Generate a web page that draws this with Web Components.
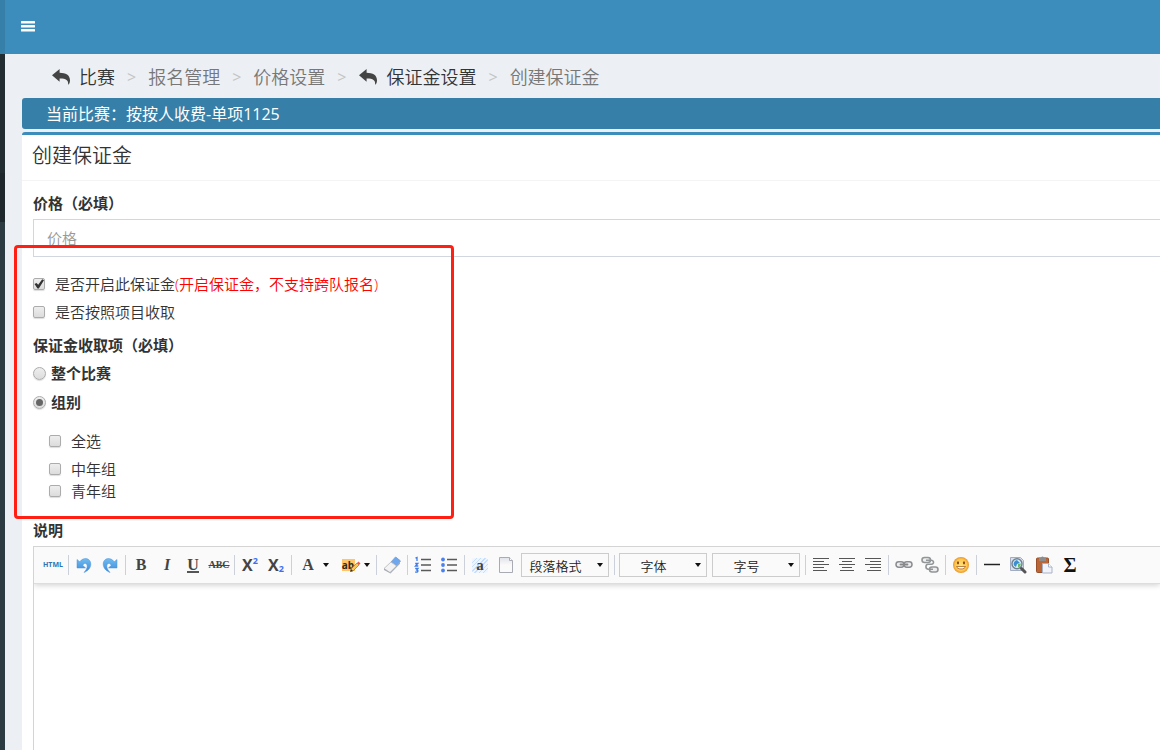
<!DOCTYPE html>
<html lang="zh-CN">
<head>
<meta charset="utf-8">
<title>创建保证金</title>
<style>
  html, body { height: 100%; margin: 0; }
  body { background: #ecf0f5; color: #333; font: 15px/22px "Open Sans", "Noto Sans CJK SC", sans-serif; overflow-x: hidden; }
</style>
</head>
<body>
<app-shell>
  <top-bar slot="header"></top-bar>
  <side-rail slot="side"></side-rail>
  <crumb-trail>
    <crumb-item href="#match" back>比赛</crumb-item>
    <crumb-item>报名管理</crumb-item>
    <crumb-item>价格设置</crumb-item>
    <crumb-item href="#deposit" back>保证金设置</crumb-item>
    <crumb-item>创建保证金</crumb-item>
  </crumb-trail>
  <match-notice>当前比赛：按按人收费-单项1125</match-notice>
  <form-panel heading="创建保证金">
    <price-field></price-field>
    <mark-frame><deposit-options></deposit-options></mark-frame>
    <rich-editor></rich-editor>
  </form-panel>
</app-shell>

<script>
function define(name, html, setup) {
  const template = document.createElement('template');
  template.innerHTML = html;
  customElements.define(name, class extends HTMLElement {
    constructor() {
      super();
      this.attachShadow({ mode: 'open' }).append(template.content.cloneNode(true));
    }
    connectedCallback() { if (setup) setup(this, this.shadowRoot); }
  });
}

define('app-shell', `
<style>
  :host { display: flex; flex-direction: column; min-height: 100vh; }
  .body { display: flex; flex: 1; }
  main { flex: 1; min-width: 0; display: flex; flex-direction: column; padding-left: 17px; }
</style>
<slot name="header"></slot>
<div class="body"><slot name="side"></slot><main><slot></slot></main></div>`);

define('top-bar', `
<style>
  :host { display: flex; height: 54px; background: #3c8dbc; border-left: 5px solid #367fa9; box-sizing: border-box; }
  button { border: 0; background: none; padding: 0 16px; display: flex; align-items: center; color: #fff; }
</style>
<button type="button" aria-label="菜单"><svg width="14" height="14" viewBox="0 0 14 14" fill="currentColor"><rect y="1" width="14" height="2.600" rx=".6"/><rect y="5" width="14" height="2.600" rx=".6"/><rect y="9" width="14" height="2.600" rx=".6"/></svg></button>`);

define('side-rail', `
<style>
  :host { display: flex; flex-direction: column; width: 5px; background: #222d32; }
  .head { height: 119px; }
  .active { height: 49px; background: #1e282c; }
  .menu { flex: 1; background: #2c3b41; }
</style>
<div class="head"></div><div class="active"></div><div class="menu"></div>`);

define('crumb-trail', `
<style>
  :host { display: block; }
  nav { display: flex; height: 44px; align-items: center; padding: 2px 0 0 29px; box-sizing: border-box; }
</style>
<nav aria-label="路径"><slot></slot></nav>`);

define('crumb-item', `
<style>
  :host { display: flex; align-items: center; font-size: 18px; line-height: 24px; font-weight: 350; color: #777; }
  :host(:not(:first-child))::before { content: ">"; color: #c4c4c4; font-size: 16px; font-weight: 400; margin: 0 12px; }
  a { display: flex; align-items: center; gap: 8px; color: #333; text-decoration: none; }
</style>
<span><slot></slot></span>`, (host, root) => {
  if (!host.hasAttribute('back')) return;
  const link = document.createElement('a');
  link.href = host.getAttribute('href');
  link.innerHTML = '<svg width="20" height="18" viewBox="0 0 20 18" fill="#444"><path d="M1 7.2 8.600 1v3.700C14.800 4.800 19 7 19 12.200c0 1.700-.5 3.300-1.400 4.300-.3.200-.6 0-.5-.3.500-3.800-2.200-5.800-8.500-5.700v3.300z"/></svg><slot></slot>';
  root.querySelector('span').replaceWith(link);
});

define('match-notice', `
<style>
  :host { display: block; background: #367fa9; color: #fff; font-size: 16px; border-radius: 3px 0 0 3px; padding: 5px 24px 4px; margin-bottom: 3px; }
</style>
<slot></slot>`);

define('form-panel', `
<style>
  :host { flex: 1; display: flex; flex-direction: column; background: #fff; border-top: 3px solid #3c8dbc; border-radius: 3px 0 0 0; }
  header { padding: 8px 10px 11px; border-bottom: 1px solid #f4f4f4; }
  h3 { margin: 0; font-size: 20px; line-height: 26px; font-weight: 350; color: #333; }
  section { flex: 1; display: flex; flex-direction: column; padding: 11px 0 0 11px; }
</style>
<header><h3></h3></header><section><slot></slot></section>`, (host, root) => {
  root.querySelector('h3').textContent = host.getAttribute('heading');
});

define('price-field', `
<style>
  :host { display: block; }
  label { display: block; font-weight: 700; margin-bottom: 5px; }
  input { display: block; width: 100%; height: 38px; box-sizing: border-box; border: 1px solid #d2d6de; border-right: 0; padding: 0 13px; font: inherit; font-weight: 350; background: #fff; border-radius: 0; }
  input::placeholder { color: #999; }
</style>
<label for="price">价格（必填）</label><input id="price" type="text" placeholder="价格">`);

define('mark-frame', `
<style>
  :host { display: block; position: relative; }
  .mark { position: absolute; left: -19px; top: -12px; bottom: 0; width: 440px; box-sizing: border-box; border: 3px solid #ff2013; border-radius: 4px; pointer-events: none; }
</style>
<slot></slot><div class="mark"></div>`);

define('deposit-options', `
<style>
  :host { display: block; padding: 16px 0 17px; font-weight: 350; }
  fieldset { border: 0; margin: 0; padding: 0; min-width: 0; }
  legend { padding: 0; font-weight: 700; margin-bottom: 6px; }
  label { display: flex; align-items: center; }
  em { font-style: normal; color: #f00; }
  .row { gap: 10px; margin-bottom: 6px; }
  .pick { font-weight: 700; gap: 5px; margin-bottom: 7px; }
  .groups { padding: 10px 0 0 16px; }
  .groups .row { margin-bottom: 0; }
  .groups .all { margin-bottom: 6px; }
  .lead { margin-bottom: 11px; }
  input { appearance: none; box-sizing: border-box; flex: none; margin: 0; width: 12px; height: 12px; display: grid; place-items: center; border: 1px solid #acacac; border-radius: 2px; background: linear-gradient(#eee, #dcdcdc); box-shadow: 0 1px 1px #ddd; }
  input[type=radio] { width: 13px; height: 13px; border-radius: 50%; }
  input[type=checkbox]:checked::before { content: ""; width: 10px; height: 10px; background: #333; clip-path: polygon(5% 50%, 25% 40%, 42% 58%, 82% 3%, 100% 12%, 48% 95%, 35% 95%); }
  input[type=radio]:checked::before { content: ""; width: 7px; height: 7px; border-radius: 50%; background: #666; }
</style>
<label class="row"><input type="checkbox" checked><span>是否开启此保证金<em>(开启保证金，不支持跨队报名)</em></span></label>
<label class="row lead"><input type="checkbox">是否按照项目收取</label>
<fieldset>
  <legend>保证金收取项（必填）</legend>
  <label class="pick"><input type="radio" name="scope">整个比赛</label>
  <label class="pick"><input type="radio" name="scope" checked>组别</label>
</fieldset>
<div class="groups">
  <label class="row all"><input type="checkbox">全选</label>
  <label class="row"><input type="checkbox">中年组</label>
  <label class="row"><input type="checkbox">青年组</label>
</div>`);

const icons = {
  undo: '<defs><linearGradient id="g" x1="0" y1="0" x2="0" y2="1"><stop stop-color="#70bdf0"/><stop offset="1" stop-color="#3a87d9"/></linearGradient></defs><path fill="url(#g)" stroke="#4a93dc" stroke-width=".5" d="M2 3.500v8.500h8.500L7.800 9.300C9 6.500 12.200 6.800 12.200 10c0 2.300-1.200 4.200-3.200 6.500 4-1.500 6.800-4.500 6.800-8.500 0-6-7.500-7.500-11-2.200z"/>',
  eraser: '<path fill="#fafafa" stroke="#aaa" d="M8 6 12.500 1l5 4-5 6z"/><path fill="#6fa7ef" d="m8 6 4-4.500q.7-.8 1.500-.3l3.500 3q.8.800.2 1.500L13.500 10z"/><path fill="#f3f3f3" stroke="#b4b6bb" stroke-width=".8" d="M8 6 13.500 10 7 16.500 1 12.500z"/><path fill="#a6aab4" d="m13.500 10 3.500-4.200v2L7.500 17.500 1 14v-1.500l6 4z"/>',
  ol: '<g stroke="#5a5a5a" stroke-width="1.500"><path d="M7 3.500h10M7 9h10M7 14.500h10"/></g><path fill="none" stroke="#3f7de8" stroke-width="1.300" d="M1.500 2.200 3 1.500V5M1.200 7.500h2.600L1.500 10h2.800M1.200 12.500H4L2.800 14q1.700.3 1 1.500-.8 1-2.600.5"/>',
  ul: '<g stroke="#5a5a5a" stroke-width="1.500"><path d="M7 3.500h10M7 9h10M7 14.500h10"/></g><g fill="#4a80f0"><circle cx="3" cy="3.500" r="1.900"/><circle cx="3" cy="9" r="1.900"/><circle cx="3" cy="14.500" r="1.900"/></g>',
  page: '<defs><linearGradient id="p" x1="0" y1="0" x2="0" y2="1"><stop stop-color="#dfe2e9"/><stop offset=".5" stop-color="#fafafa"/></linearGradient></defs><path fill="url(#p)" stroke="#a8abb3" d="M2.500 1.500h10l3 3v12h-13z"/><path fill="#fff" stroke="#a8abb3" d="M12.500 1.500v3h3"/>',
  left: '<path stroke="#555" d="M1 2.500h16M1 5.500h11M1 8.500h16M1 11.500h11M1 14.500h14"/>',
  center: '<path stroke="#555" d="M1 2.500h16M4 5.500h10M1 8.500h16M4 11.500h10M2 14.500h14"/>',
  right: '<path stroke="#555" d="M1 2.500h16M6 5.500h11M1 8.500h16M6 11.500h11M3 14.500h14"/>',
  link: '<g fill="#eee" stroke="#8a8e90" stroke-width="1.500"><rect x="1" y="5.800" width="8" height="5.400" rx="2.700"/><rect x="9" y="5.800" width="8" height="5.400" rx="2.700"/></g><path stroke="#888" stroke-width="1.800" stroke-linecap="round" d="M5.500 8.500h7"/>',
  unlink: '<g fill="#eee" stroke="#929698" stroke-width="1.600"><rect x="1" y="1.500" width="8.500" height="5" rx="2.500"/><rect x="8.500" y="11" width="8.500" height="5" rx="2.500"/><path fill="none" d="M5 4.200h5c3 0 3.500 4 .5 4H7c-2.500 0-3 4.500 0 5h5"/></g>',
  smile: '<defs><radialGradient id="s"><stop stop-color="#ffe27a"/><stop offset=".7" stop-color="#ffc84f"/><stop offset="1" stop-color="#e9942c"/></radialGradient></defs><circle cx="9" cy="9" r="8" fill="url(#s)"/><g fill="#8a4a1c"><ellipse cx="6" cy="6.800" rx="1.100" ry="1.600"/><ellipse cx="12" cy="6.800" rx="1.100" ry="1.600"/></g><path fill="#fff" stroke="#a8642a" stroke-width=".8" d="M4.500 10.500h9c-.6 3.300-8.400 3.300-9 0z"/>',
  rule: '<path stroke="#222" stroke-width="1.500" d="M1 8.500h16"/>',
  preview: '<path fill="#d9e0ec" stroke="#a2adc2" d="M1.500 1.500h10l3 3v10h-13z"/><circle cx="8" cy="7.800" r="5" fill="#d7f0fb" stroke="#71808f" stroke-width="1.400"/><path fill="#3d8fd2" d="M8 4a4 4 0 0 0-3 5.500l2 1.500 1-3 3-1z"/><path fill="#6bb868" d="m9 8 3-.5-1 3-2 1z"/><path stroke="#555" stroke-width="3" stroke-linecap="round" d="m12.500 12.500 3.500 3.500"/>',
  paste: '<rect x="1.500" y="2" width="12" height="14.500" rx="1" fill="#bb6636" stroke="#99502a"/><path fill="#8c8c8c" d="M4 1.500h2q1.500-2 3 0h2V5H4z"/><path fill="#f1f4fa" stroke="#a8b2c4" d="M7.500 7.500h6l3.500 3.500v6H7.500z"/><path fill="#fff" stroke="#a8b2c4" d="M13.500 7.500V11H17"/>',
  pencil: '<path fill="#f6c65c" stroke="#ad6b27" stroke-width=".7" d="m3 10 6-6 2 2-6 6-2.500.5z"/><path fill="#e85d4b" d="m9 4 1.500-1.500 2 2L11 6z"/><path fill="#333" d="m3 10-.8 2.700L5 12z"/>'
};

define('tool-button', `
<style>
  :host { display: block; flex: none; }
  button { width: 26px; height: 24px; border: 0; padding: 0; background: none; display: flex; align-items: center; justify-content: center; color: #444; font: 700 16px/20px "Liberation Serif", serif; }
  :host([menu]) button { width: 40px; gap: 8px; padding-left: 4px; }
  svg { flex: none; }
  .flip { transform: scaleX(-1); }
  .html { font: 700 7px/12px "Open Sans", sans-serif; color: #2f75b5; }
  .italic { font-style: italic; }
  .under { border-bottom: 2px solid #555; line-height: 13px; }
  .strike { font-size: 10px; text-decoration: line-through; }
  .script { font: 700 16px/18px "Open Sans", sans-serif; display: flex; }
  sup, sub { font-size: 9px; line-height: 10px; color: #3d6ff0; }
  sub { align-self: flex-end; }
  .high { position: relative; background: #ffc568; font: 700 10px/12px "Open Sans", sans-serif; color: #33291a; width: 13px; }
  .high svg { position: absolute; left: 6px; top: 0; }
  .pattern { background: repeating-linear-gradient(135deg, #c6defc 0 1px, #edf5ff 1px 3px); border-radius: 3px; width: 16px; line-height: 15px; font-size: 15px; }
  .sigma { font-size: 20px; color: #111; }
</style>
<button type="button"></button>`, (host, root) => {
  const texts = {
    html: '<span class="html">HTML</span>', bold: 'B', italic: '<span class="italic">I</span>',
    underline: '<span class="under">U</span>', strike: '<span class="strike">ABC</span>',
    sup: '<span class="script">X<sup>2</sup></span>', sub: '<span class="script">X<sub>2</sub></span>',
    color: '<span>A</span>', high: '<span class="high">ab<svg width="14" height="14" viewBox="0 0 14 14">' + icons.pencil + '</svg></span>',
    auto: '<span class="pattern">a</span>', sigma: '<span class="sigma">Σ</span>'
  };
  const kind = host.getAttribute('kind');
  const draw = (name, flip) => `<svg class="${flip}" width="18" height="18" viewBox="0 0 18 18" fill="none">${icons[name]}</svg>`;
  const button = root.querySelector('button');
  button.setAttribute('aria-label', kind);
  button.innerHTML = texts[kind] || (kind === 'redo' ? draw('undo', 'flip') : draw(kind, ''));
  if (host.hasAttribute('menu')) button.innerHTML += '<svg width="8" height="4" viewBox="0 0 8 4"><path d="M1 0h6L4 4z" fill="#111"/></svg>';
});

define('tool-select', `
<style>
  :host { display: grid; flex: none; width: 88px; height: 24px; align-items: center; margin: 0 3px 0 2px; }
  select, svg { grid-area: 1 / 1; }
  select { appearance: none; width: 100%; height: 24px; box-sizing: border-box; border: 1px solid #ccc; border-radius: 0; background: #fafafa; padding: 2px 19px 0 0; margin: 0; text-align-last: center; font: 350 13px/20px "Open Sans", "Noto Sans CJK SC", sans-serif; color: #222; }
  svg { justify-self: end; margin-right: 5px; pointer-events: none; }
</style>
<select><option></option></select><svg width="8" height="4" viewBox="0 0 8 4"><path d="M1 0h6L4 4z" fill="#111"/></svg>`, (host, root) => {
  const name = host.getAttribute('label');
  root.querySelector('select').setAttribute('aria-label', name);
  root.querySelector('option').textContent = name;
});

define('rich-editor', `
<style>
  :host { flex: 1; display: flex; flex-direction: column; }
  #name { font-weight: 700; margin-bottom: 5px; }
  .frame { flex: 1; display: flex; flex-direction: column; border: 1px solid #d4d4d4; border-width: 1px 0 0 1px; }
  .bar { display: flex; align-items: center; height: 36px; padding-left: 6px; background: #fafafa; border-bottom: 1px solid #ddd; box-shadow: 0 1px 6px rgba(0, 0, 0, .2); clip-path: inset(0 0 -8px 0); }
  hr { flex: none; width: 1px; height: 20px; margin: 0 2px; border: 0; background: #ccd0d8; }
  .text { flex: 1; min-height: 120px; outline: 0; padding: 8px; }
</style>
<div id="name">说明</div>
<div class="frame">
  <div class="bar" role="toolbar">
    <tool-button kind="html"></tool-button><hr>
    <tool-button kind="undo"></tool-button><tool-button kind="redo"></tool-button><hr>
    <tool-button kind="bold"></tool-button><tool-button kind="italic"></tool-button><tool-button kind="underline"></tool-button><tool-button kind="strike"></tool-button><hr>
    <tool-button kind="sup"></tool-button><tool-button kind="sub"></tool-button><hr>
    <tool-button kind="color" menu></tool-button><tool-button kind="high" menu></tool-button><hr>
    <tool-button kind="eraser"></tool-button><hr>
    <tool-button kind="ol"></tool-button><tool-button kind="ul"></tool-button><hr>
    <tool-button kind="auto"></tool-button><tool-button kind="page"></tool-button>
    <tool-select label="段落格式"></tool-select><hr>
    <tool-select label="字体"></tool-select><tool-select label="字号"></tool-select><hr>
    <tool-button kind="left"></tool-button><tool-button kind="center"></tool-button><tool-button kind="right"></tool-button><hr>
    <tool-button kind="link"></tool-button><tool-button kind="unlink"></tool-button><hr>
    <tool-button kind="smile"></tool-button><hr>
    <tool-button kind="rule"></tool-button><tool-button kind="preview"></tool-button><tool-button kind="paste"></tool-button><tool-button kind="sigma"></tool-button>
  </div>
  <div class="text" contenteditable="true" role="textbox" aria-labelledby="name"></div>
</div>`);
</script>
</body>
</html>
